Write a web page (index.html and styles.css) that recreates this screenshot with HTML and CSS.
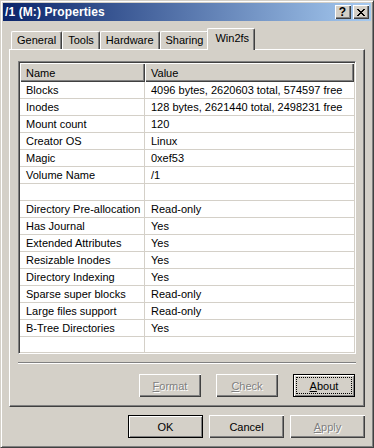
FILE: index.html
```html
<!DOCTYPE html>
<html>
<head>
<meta charset="utf-8">
<title>/1 (M:) Properties</title>
<link rel="stylesheet" href="styles.css">
</head>
<body>
<div class="window">
  <div class="titlebar">
    <span class="title">/1 (M:) Properties</span>
    <div class="caption-btns">
      <button class="cap cap-help">?</button>
      <button class="cap cap-close"><svg width="8" height="7" viewBox="0 0 8 7"><path d="M0 0h2v1H0z M6 0h2v1H6z M1 1h2v1H1z M5 1h2v1H5z M2 2h4v1H2z M3 3h2v1H3z M2 4h4v1H2z M1 5h2v1H1z M5 5h2v1H5z M0 6h2v1H0z M6 6h2v1H6z" fill="#000"/></svg></button>
    </div>
  </div>
  <div class="body">
    <div class="tabs">
      <div class="tab">General</div>
      <div class="tab">Tools</div>
      <div class="tab">Hardware</div>
      <div class="tab">Sharing</div>
      <div class="tab active">Win2fs</div>
    </div>
    <div class="panel">
      <div class="listview">
        <div class="lv-header">
          <div class="hcell">Name</div>
          <div class="hcell">Value</div>
        </div>
        <div class="row"><div class="cell name">Blocks</div><div class="cell">4096 bytes, 2620603 total, 574597 free</div></div>
        <div class="row"><div class="cell name">Inodes</div><div class="cell">128 bytes, 2621440 total, 2498231 free</div></div>
        <div class="row"><div class="cell name">Mount count</div><div class="cell">120</div></div>
        <div class="row"><div class="cell name">Creator OS</div><div class="cell">Linux</div></div>
        <div class="row"><div class="cell name">Magic</div><div class="cell">0xef53</div></div>
        <div class="row"><div class="cell name">Volume Name</div><div class="cell">/1</div></div>
        <div class="row"><div class="cell name"></div><div class="cell"></div></div>
        <div class="row"><div class="cell name">Directory Pre-allocation</div><div class="cell">Read-only</div></div>
        <div class="row"><div class="cell name">Has Journal</div><div class="cell">Yes</div></div>
        <div class="row"><div class="cell name">Extended Attributes</div><div class="cell">Yes</div></div>
        <div class="row"><div class="cell name">Resizable Inodes</div><div class="cell">Yes</div></div>
        <div class="row"><div class="cell name">Directory Indexing</div><div class="cell">Yes</div></div>
        <div class="row"><div class="cell name">Sparse super blocks</div><div class="cell">Read-only</div></div>
        <div class="row"><div class="cell name">Large files support</div><div class="cell">Read-only</div></div>
        <div class="row"><div class="cell name">B-Tree Directories</div><div class="cell">Yes</div></div>
        <div class="row"><div class="cell name"></div><div class="cell"></div></div>
      </div>
      <div class="separator"></div>
      <div class="panel-buttons">
        <button class="btn btn-small" disabled><u>F</u>ormat</button>
        <button class="btn btn-small" disabled><u>C</u>heck</button>
        <button class="btn btn-small default focus"><u>A</u>bout</button>
      </div>
    </div>
    <div class="dialog-buttons">
      <button class="btn btn-wide default">OK</button>
      <button class="btn btn-wide">Cancel</button>
      <button class="btn btn-wide" disabled><u>A</u>pply</button>
    </div>
  </div>
</div>
</body>
</html>
```

FILE: styles.css
```css
* { box-sizing: border-box; }
html, body { margin: 0; padding: 0; }
body {
  width: 374px;
  height: 448px;
  overflow: hidden;
  background: #d4d0c8;
  font-family: "Liberation Sans", Arial, sans-serif;
  font-size: 11px;
  color: #000;
}
.window {
  width: 374px;
  height: 448px;
  border: 1px solid;
  border-color: #d4d0c8 #404040 #404040 #d4d0c8;
  box-shadow: inset 1px 1px #fff, inset -1px -1px #808080;
  padding: 2px;
  display: flex;
  flex-direction: column;
  background: #d4d0c8;
}
.titlebar {
  height: 18px;
  flex: none;
  background: linear-gradient(to right, #0a246a, #a6caf0);
  display: flex;
  align-items: center;
  justify-content: space-between;
  padding: 0 2px;
}
.title {
  color: #fff;
  font-weight: bold;
  font-size: 12px;
  letter-spacing: 0.1px;
}
.caption-btns { display: flex; gap: 2px; }
.cap {
  width: 16px;
  height: 14px;
  padding: 0;
  border: none;
  background: #d4d0c8;
  box-shadow: inset 1px 1px #fff, inset -1px -1px #404040, inset -2px -2px #808080;
  display: flex;
  align-items: center;
  justify-content: center;
  font: bold 12px "Liberation Sans", Arial, sans-serif;
  color: #000;
}
.cap-help { padding-right: 1px; }
.body {
  flex: 1;
  padding: 0 6px;
  display: flex;
  flex-direction: column;
}
.tabs {
  display: flex;
  align-items: flex-end;
  height: 21px;
  margin-top: 7px;
  padding-left: 2px;
}
.tab {
  height: 18px;
  padding: 0 5px 1px 5px;
  border: 1px solid #fff;
  border-bottom: none;
  border-right-color: #404040;
  border-radius: 2px 2px 0 0;
  box-shadow: inset -1px 0 #808080;
  display: flex;
  align-items: center;
  background: #d4d0c8;
}
.tab.active {
  height: 22px;
  margin: 0 -2px -1px -2px;
  padding: 0 5px 3px 7px;
  position: relative;
  z-index: 1;
}
.panel {
  height: 358px;
  flex: none;
  border: 1px solid;
  border-color: #fff #404040 #404040 #fff;
  box-shadow: inset -1px -1px #808080;
  padding: 11px 8px 0 8px;
  display: flex;
  flex-direction: column;
}
.listview {
  height: 293px;
  flex: none;
  border: 1px solid;
  border-color: #808080 #fff #fff #808080;
  box-shadow: inset 1px 1px #404040, inset -1px -1px #d4d0c8;
  padding: 1px;
  background: #fff;
  overflow: hidden;
}
.lv-header {
  display: grid;
  grid-template-columns: 125px 1fr;
  height: 19px;
}
.hcell {
  background: #d4d0c8;
  box-shadow: inset 1px 1px #fff, inset -1px -1px #404040, inset -2px -2px #808080;
  padding-left: 6px;
  display: flex;
  align-items: center;
}
.row {
  display: grid;
  grid-template-columns: 125px 1fr;
  height: 17px;
}
.cell {
  border-bottom: 1px solid #d4d0c8;
  padding-left: 6px;
  line-height: 16px;
  white-space: nowrap;
  overflow: hidden;
}
.cell.name { border-right: 1px solid #d4d0c8; }
.separator {
  height: 2px;
  margin-top: 8px;
  border-top: 1px solid #808080;
  border-bottom: 1px solid #fff;
}
.panel-buttons {
  display: flex;
  justify-content: flex-end;
  gap: 15px;
  margin-top: 10px;
  padding-right: 1px;
}
.dialog-buttons {
  display: flex;
  justify-content: flex-end;
  gap: 6px;
  margin-top: 8px;
}
.btn {
  height: 23px;
  padding: 0;
  border: none;
  background: #d4d0c8;
  font: 11px "Liberation Sans", Arial, sans-serif;
  color: #000;
  box-shadow: inset 1px 1px #fff, inset -1px -1px #404040, inset -2px -2px #808080;
}
.btn-small { width: 62px; }
.btn-wide { width: 75px; }
.btn.default {
  border: 1px solid #000;
  box-shadow: inset 1px 1px #fff, inset -1px -1px #808080;
}
.btn.focus {
  outline: 1px dotted #000;
  outline-offset: -4px;
}
.btn:disabled {
  color: #808080;
  text-shadow: 1px 1px #fff;
}
```
